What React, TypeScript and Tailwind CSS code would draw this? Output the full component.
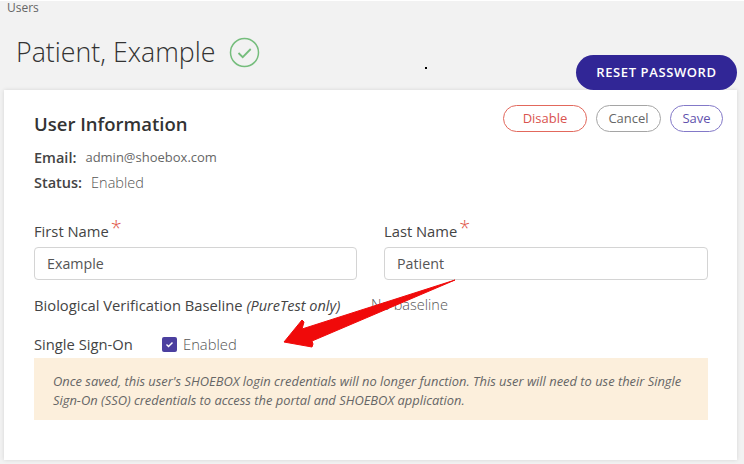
import React from 'react';

const Req = () => <span className="text-[#e0574a] text-[20px] font-light leading-[14px] ml-[2px] self-start mt-[1px]">*</span>;

function NameField({ label, value, className }: { label: string; value: string; className: string }) {
  return (
    <div className={className}>
      <div className="flex h-[22px] items-center text-[14.75px] text-[#444]">
        {label}
        <Req />
      </div>
      <div className="mt-[5px] h-[33px] rounded-[4px] border border-[#d4d4d4] bg-white pl-[12px] flex items-center text-[14.25px] text-[#555]">
        {value}
      </div>
    </div>
  );
}

export default function App() {
  return (
    <div className="relative w-[744px] h-[464px] overflow-hidden bg-[#f2f2f2] text-[#444] font-['Open_Sans',sans-serif]">
      <div className="h-[1px] bg-white" />
      <div className="pl-[7px] h-[14px] flex items-center text-[12px] text-[#666]">Users</div>

      <div className="flex items-start justify-between h-[75px] pl-[16px] pr-[7px]">
        <div className="flex items-center mt-[20px] h-[34px]">
          <h1 className="text-[26.75px] font-light text-[#333] leading-[34px]">Patient, Example</h1>
          <svg className="ml-[13px]" width="31" height="31" viewBox="0 0 31 31" fill="none">
            <circle cx="15.5" cy="15.5" r="14" stroke="#75bd7c" strokeWidth="1.5" />
            <path d="M9.5 16l4.2 4.2 8-8.2" stroke="#75bd7c" strokeWidth="1.8" />
          </svg>
        </div>
        <button className="mt-[40px] h-[35px] w-[161px] rounded-full bg-[#312696] text-white text-[13px] font-semibold tracking-[0.6px]">
          RESET PASSWORD
        </button>
      </div>

      <div className="ml-[4px] w-[733px] h-[370px] bg-white shadow-[0_0_4px_rgba(0,0,0,0.12)] pl-[30px] pr-[29px] pt-[15px]">
        <div className="flex items-start justify-between">
          <div className="text-[18.5px] font-semibold text-[#333] mt-[7px] leading-[24px]">User Information</div>
          <div className="flex gap-[9px] -mr-[15px]">
            <button className="h-[27px] w-[84px] rounded-full border border-[#e2685c] text-[13px] text-[#d9534f]">Disable</button>
            <button className="h-[27px] w-[65px] rounded-full border border-[#a5a5a5] text-[13px] text-[#666]">Cancel</button>
            <button className="h-[27px] w-[53px] rounded-full border border-[#8379c8] text-[13px] text-[#5f52ad]">Save</button>
          </div>
        </div>

        <div className="mt-[9px] flex items-center h-[26px] text-[14.5px]">
          <span className="font-semibold text-[#444]">Email:</span>
          <span className="ml-[9px] text-[13px] text-[#666]">admin@shoebox.com</span>
        </div>
        <div className="flex items-center h-[24px] text-[14.5px]">
          <span className="font-semibold text-[#444]">Status:</span>
          <span className="ml-[9px] font-light text-[#555]">Enabled</span>
        </div>

        <div className="mt-[25px] flex gap-[27px]">
          <NameField className="w-[323px]" label="First Name" value="Example" />
          <NameField className="w-[324px]" label="Last Name" value="Patient" />
        </div>

        <div className="mt-[13px] flex items-center h-[24px] text-[14.75px] text-[#444]">
          <span className="w-[337px] whitespace-nowrap">
            Biological Verification Baseline <em className="text-[14.5px]">(PureTest only)</em>
          </span>
          <span className="font-light text-[#555] text-[14.5px]">No baseline</span>
        </div>

        <div className="mt-[15px] flex items-center h-[24px] text-[14.75px] text-[#444]">
          <span className="w-[128px]">Single Sign-On</span>
          <span className="w-[15px] h-[15px] rounded-[2px] bg-[#4b3f9f] flex items-center justify-center">
            <svg width="11" height="11" viewBox="0 0 11 11" fill="none">
              <path d="M2.5 5.6l2 2 4-4.2" stroke="#fff" strokeWidth="1.4" />
            </svg>
          </span>
          <span className="ml-[6px] font-light text-[#555]">Enabled</span>
        </div>

        <div className="mt-[2px] w-[674px] h-[62px] bg-[#fcefdc] pl-[19px] pr-[24px] pt-[3px] flex items-center text-[12.9px] italic leading-[18.5px] text-[#666]">
          <p>
            Once saved, this user's SHOEBOX login credentials will no longer function. This user will need to use their Single Sign-On (SSO) credentials to access the portal and SHOEBOX application.
          </p>
        </div>
      </div>

      <span className="absolute left-[425px] top-[67px] w-[2px] h-[2px] bg-black" />

      {/* annotation arrow drawn over the form */}
      <svg className="absolute left-0 top-0" width="744" height="464" viewBox="0 0 744 464">
        <polygon
          points="455,280 302,329 304,322 302,320 284,342 312,347 313,344 312,341"
          fill="#f00a0a"
          stroke="#f00a0a"
          strokeWidth="1"
          strokeLinejoin="round"
        />
      </svg>
    </div>
  );
}
